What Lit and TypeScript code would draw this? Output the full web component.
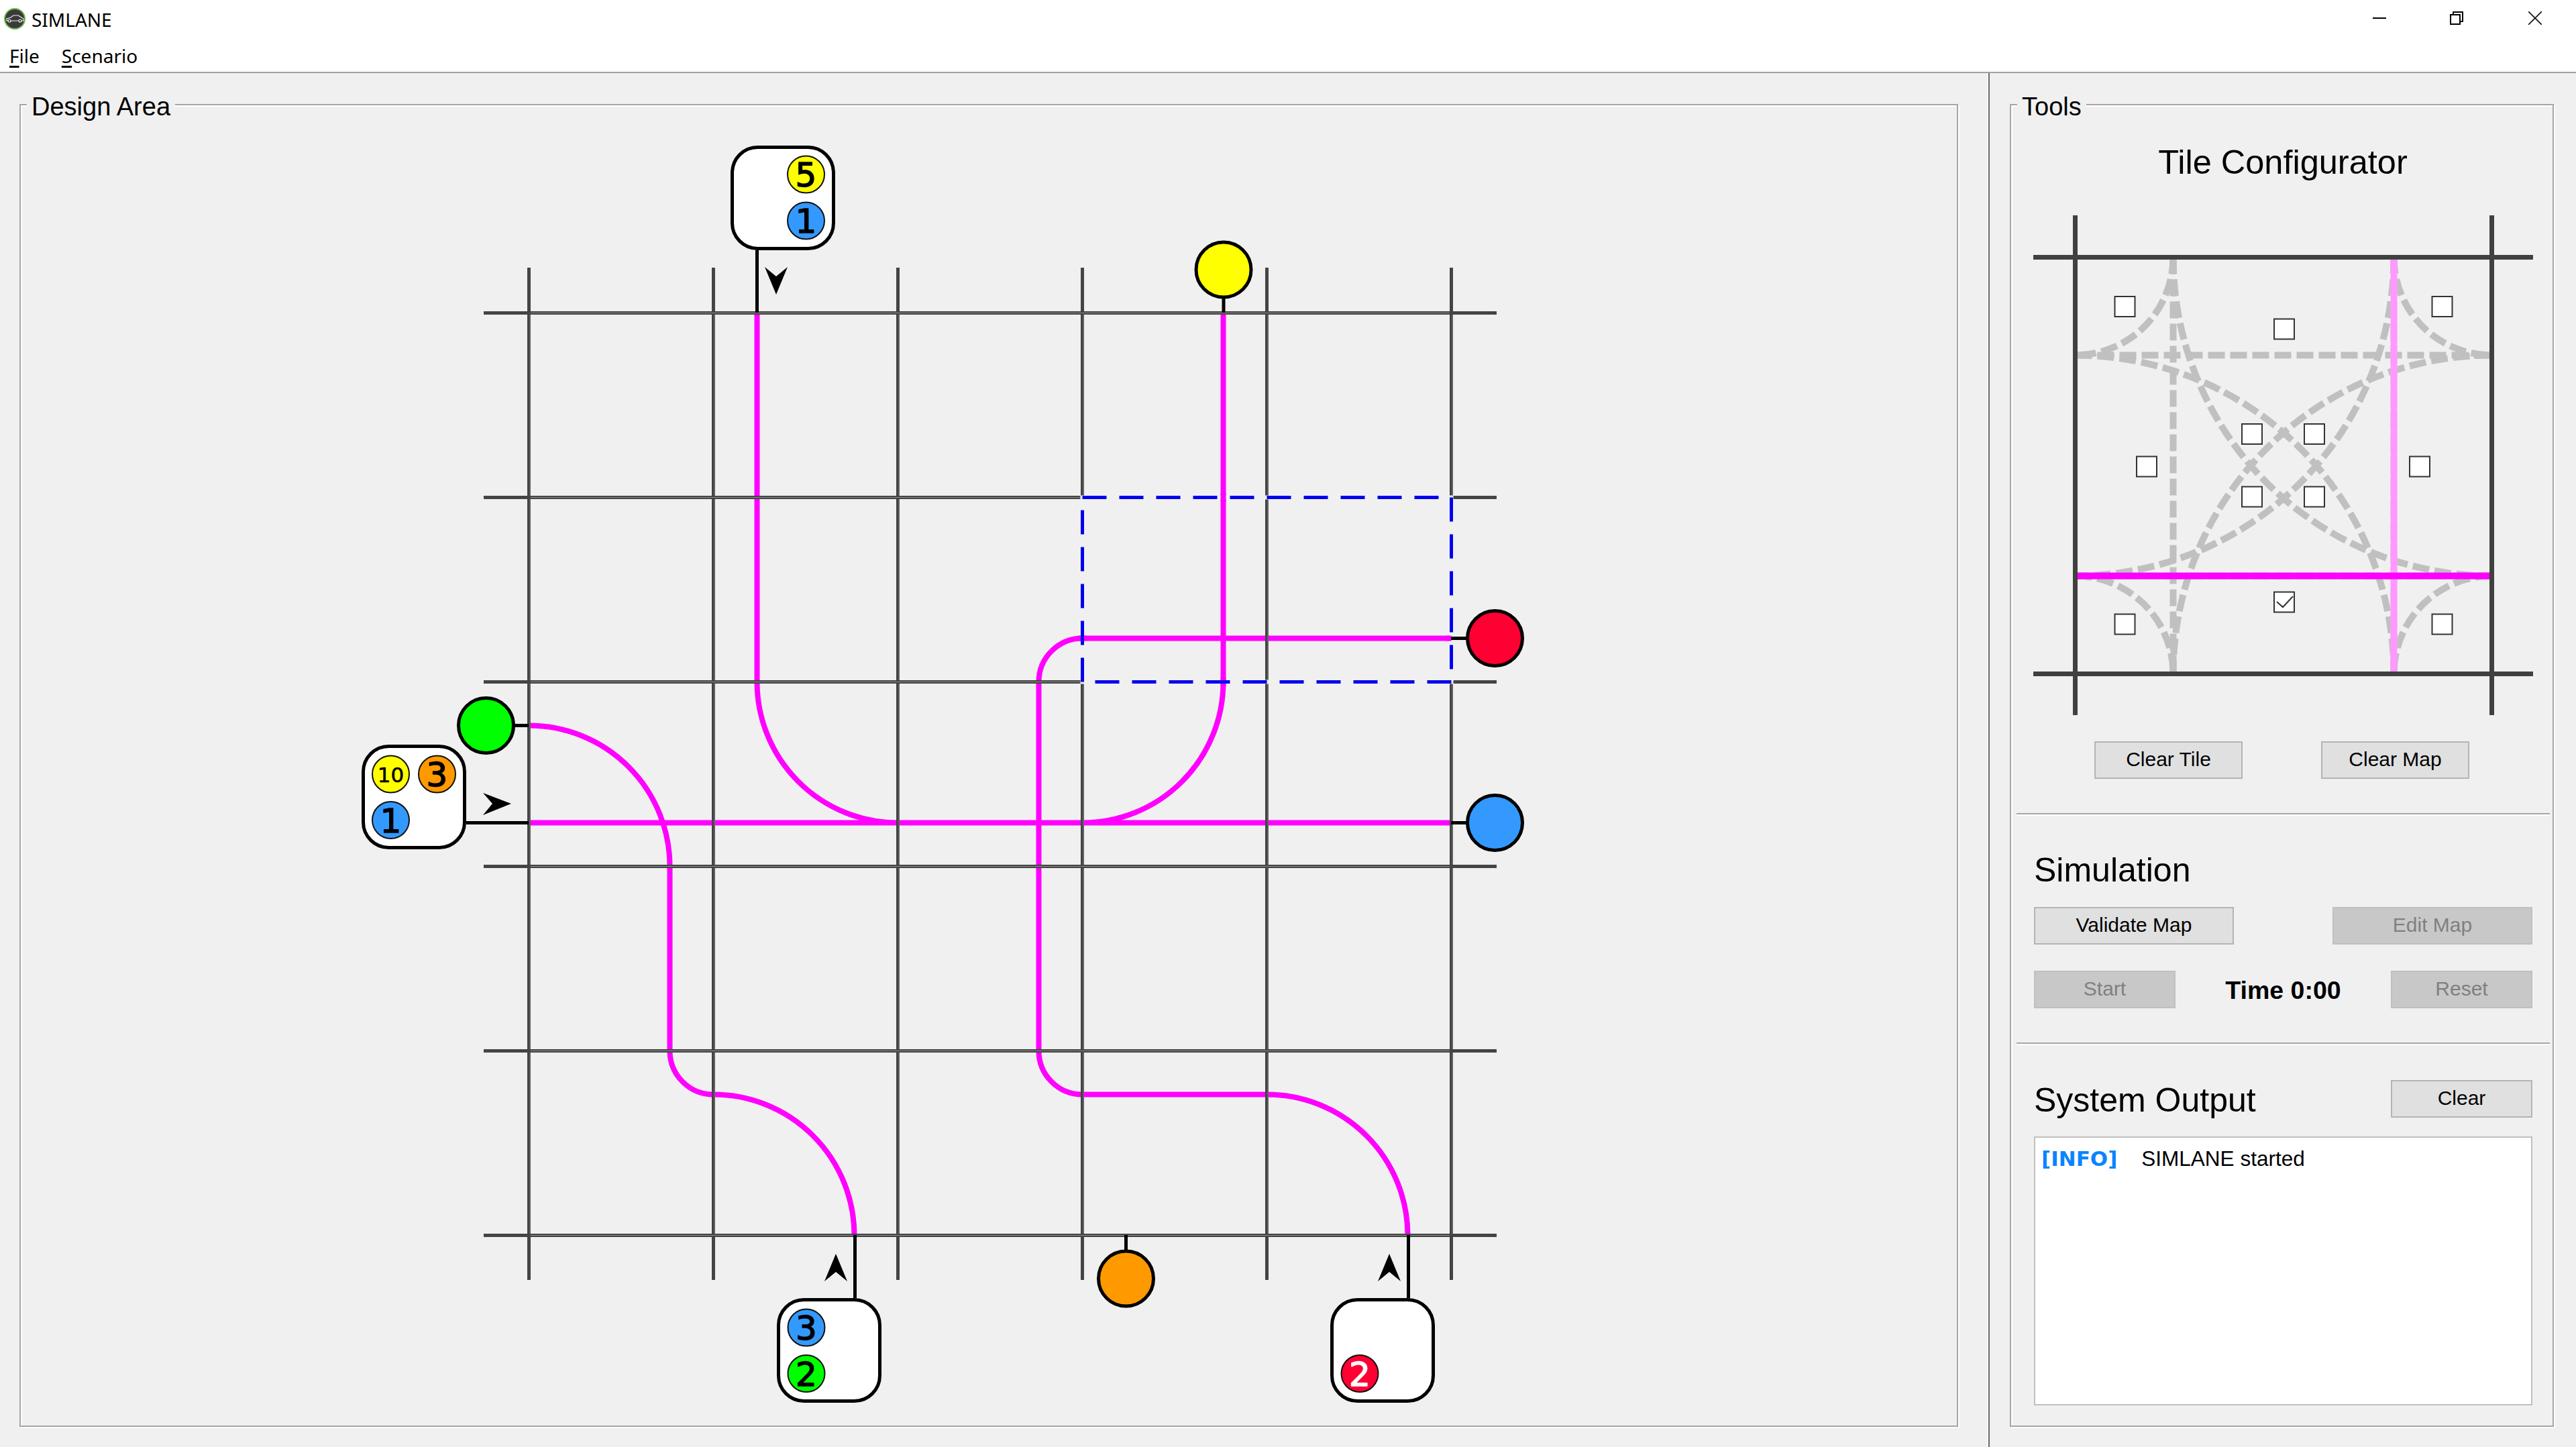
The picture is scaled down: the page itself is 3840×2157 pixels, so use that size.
import { LitElement, html, css, svg } from 'lit';
import { customElement } from 'lit/decorators.js';

interface Badge {
  x: number;
  y: number;
  fill: string;
  label: string;
  light?: boolean;
}

const GRID_X = [788.5, 1063.5, 1338.5, 1613.5, 1888.5, 2163.5];
const GRID_Y = [466.5, 741.5, 1016.5, 1291.5, 1566.5, 1841.5];

const ROUTES = [
  'M1128.5 466.5 V1016.5 A210 210 0 0 0 1338.5 1226.5 H1613.5 A210 210 0 0 0 1823.5 1016.5 V466.5',
  'M2163.5 951.5 H1613.5 A65 65 0 0 0 1548.5 1016.5 V1566.5 A65 65 0 0 0 1613.5 1631.5 H1888.5 A210 210 0 0 1 2098.5 1841.5',
  'M788.5 1081.5 A210 210 0 0 1 998.5 1291.5 V1566.5 A65 65 0 0 0 1063.5 1631.5 A210 210 0 0 1 1273.5 1841.5',
  'M788.5 1226.5 H2163.5',
];

// route pieces that cross the edge of the selection, repainted over its backing
const SELECTION_CROSSINGS = 'M1823.5 735 V748 M1823.5 1010 V1023 M1607 951.5 H1620 M2157 951.5 H2163.5';

const STUBS = [
  'M1128.5 373 V466', 'M1824 402 V466', 'M2163 951.5 H2228', 'M2163 1226.5 H2228',
  'M724 1081.5 H788', 'M695 1226.5 H788', 'M1274.5 1841 V1935', 'M2099.5 1841 V1935', 'M1678.5 1841 V1906',
];

const JUNCTIONS = [
  { x: 1824, y: 402, fill: '#ffff00' },
  { x: 2228.5, y: 951.5, fill: '#ff0033' },
  { x: 2228.5, y: 1226.5, fill: '#3399ff' },
  { x: 724.5, y: 1081.5, fill: '#00ff00' },
  { x: 1678.5, y: 1906, fill: '#ff9900' },
];

const SOURCES = [
  { x: 1091.5, y: 219.5 },
  { x: 541.5, y: 1112.5 },
  { x: 1160.5, y: 1937.5 },
  { x: 1985.5, y: 1937.5 },
];

const ARROWS = [
  '1140,398 1157,412 1174,398 1157,439',
  '720,1182 734,1198 720,1215 762,1198',
  '1246,1869 1229,1910 1246,1896 1263,1910',
  '2071,1869 2054,1910 2071,1896 2088,1910',
];

const BADGES: Badge[] = [
  { x: 1201.5, y: 260, fill: '#ffff00', label: '5' },
  { x: 1201.5, y: 329, fill: '#3399ff', label: '1' },
  { x: 582.5, y: 1154, fill: '#ffff00', label: '10' },
  { x: 651.5, y: 1154, fill: '#ff9900', label: '3' },
  { x: 582.5, y: 1222.5, fill: '#3399ff', label: '1' },
  { x: 1202, y: 1979, fill: '#3399ff', label: '3' },
  { x: 1202, y: 2047.5, fill: '#00ff00', label: '2' },
  { x: 2027, y: 2047.5, fill: '#ff0033', label: '2', light: true },
];

// tile configurator: lanes as offsets inside a 621 tile whose corner is at 3093.5,383.5
const TILE_DASHED = [
  'M146 0 V621', 'M475 0 V621', 'M0 146 H621', 'M0 475 H621',
  'M146 0 A475 475 0 0 0 621 475', 'M475 0 A475 475 0 0 1 0 475',
  'M0 146 A475 475 0 0 1 475 621', 'M621 146 A475 475 0 0 0 146 621',
  'M146 0 A146 146 0 0 1 0 146', 'M475 0 A146 146 0 0 0 621 146',
  'M0 475 A146 146 0 0 1 146 621', 'M621 475 A146 146 0 0 0 475 621',
];

const CHECKS = [
  [3167.5, 457], [3405, 490.5], [3640.5, 457], [3200, 695.5], [3607, 695.5],
  [3357, 647], [3450, 647], [3357, 740.5], [3450, 740.5],
  [3405, 897.5], [3167.5, 930.5], [3640.5, 930.5],
];

@customElement('app-root')
export class AppRoot extends LitElement {
  static styles = css`
    :host {
      display: block;
      width: 3840px;
      height: 2157px;
      overflow: hidden;
      background: #f0f0f0;
      font-family: 'Liberation Sans', Arial, sans-serif;
      color: #000;
    }
    svg {
      display: block;
    }
    .chrome {
      background: #fff;
      border-bottom: 2px solid #a0a0a0;
      font-family: 'Noto Sans', 'Open Sans', sans-serif;
      font-size: 28px;
    }
    .titlebar {
      height: 56px;
      display: flex;
      align-items: flex-start;
    }
    .app-icon {
      margin: 12px 9px 0 6px;
    }
    .app-name {
      line-height: 56px;
      margin-top: 1px;
    }
    .window-buttons {
      margin-left: auto;
      display: flex;
      gap: 95px;
      padding: 17px 51px 0 0;
    }
    .window-close {
      margin-left: 2px;
    }
    .menubar {
      height: 51px;
      display: flex;
      gap: 33px;
      padding-left: 14px;
      line-height: 54px;
    }
    .menubar u {
      text-decoration-thickness: 3px;
      text-underline-offset: 4px;
    }
    .main {
      display: flex;
      height: 2048px;
    }
    .left-pane {
      width: 2966px;
      box-sizing: border-box;
      padding: 46px 0 0 29px;
      border-right: 2px solid #6a6a6a;
      box-shadow: inset -6px 0 0 -4px #f8f8f8;
    }
    .group {
      position: relative;
      box-sizing: border-box;
      height: 1972px;
      border: 2px solid #a6a6a6;
      box-shadow: inset 2px 2px 0 #fff, 2px 2px 0 #fff;
    }
    .design {
      width: 2890px;
    }
    .tools {
      width: 811px;
      margin: 46px 0 0 30px;
      display: flex;
      flex-direction: column;
    }
    .legend {
      position: absolute;
      top: -20px;
      left: 9px;
      padding: 0 7px;
      background: #f0f0f0;
      font-size: 38px;
      line-height: 44px;
    }
    .tile-title {
      margin-top: 55px;
      padding-left: 3px;
      font-size: 50.5px;
      line-height: 60px;
      text-align: center;
    }
    .config {
      margin-top: 28px;
    }
    .tile-buttons {
      margin-top: 30px;
      display: flex;
      justify-content: center;
      gap: 117px;
    }
    button {
      box-sizing: border-box;
      width: 221px;
      height: 56px;
      padding: 0 0 3px;
      background: #e0e0e0;
      border: 2px solid #b4b4b4;
      border-radius: 0;
      font-family: inherit;
      font-size: 30px;
      color: #000;
    }
    button:disabled {
      background: #c8c8c8;
      border-color: #c0c0c0;
      color: #808080;
    }
    button.wide {
      width: 298px;
    }
    button.narrow {
      width: 211px;
    }
    .separator {
      height: 2px;
      margin: 51px 4px 0 8px;
      background: #a6a6a6;
      box-shadow: 0 2px 0 #fff;
    }
    .section {
      padding: 0 30px 0 34px;
    }
    h2 {
      margin: 0;
      font-weight: 400;
      font-size: 50px;
      line-height: 60px;
    }
    .simulation {
      margin-top: 53px;
    }
    .row {
      display: flex;
      justify-content: space-between;
      align-items: center;
    }
    .row-first {
      margin-top: 25px;
    }
    .row-second {
      margin-top: 39px;
    }
    .time {
      padding-top: 2px;
      font-weight: 700;
      font-size: 37.5px;
    }
    .output-section {
      margin-top: 54px;
    }
    .output-head {
      display: flex;
      justify-content: space-between;
      align-items: flex-start;
    }
    .output {
      box-sizing: border-box;
      height: 401px;
      margin-top: 24px;
      padding: 13px 9px;
      background: #fff;
      border: 2px solid #c0c0c0;
      display: flex;
      gap: 36px;
      align-items: baseline;
      line-height: 36px;
    }
    .tag {
      font-family: 'DejaVu Sans', sans-serif;
      font-weight: 700;
      font-size: 31px;
      color: #0a84ff;
    }
    .message {
      font-size: 31.5px;
    }
  `;

  private _renderDesignCanvas() {
    return html`
      <svg width="2886" height="1968" viewBox="31 157 2886 1968">
        <path d=${ROUTES.join(' ')} fill="none" stroke="#ff00ff" stroke-width="8" />
        ${GRID_X.map((x) => svg`
          <path d="M${x} 399 V1908" stroke="#444" stroke-width="5" />
          <path d="M${x + 1.5} 466.5 V1841.5" stroke="#808080" stroke-width="1" />
        `)}
        ${GRID_Y.map((y) => svg`
          <path d="M721 ${y} H2231" stroke="#444" stroke-width="5" />
          <path d="M791 ${y} H2161" stroke="#8c8c8c" stroke-width="1" />
        `)}
        <rect x="1613.5" y="741.5" width="550" height="275" fill="none" stroke="#f0f0f0" stroke-width="6" />
        <path d=${SELECTION_CROSSINGS} fill="none" stroke="#ff00ff" stroke-width="8" />
        <rect x="1613.5" y="741.5" width="550" height="275" fill="none" stroke="#0000ee" stroke-width="5" stroke-dasharray="36 19" />
        ${STUBS.map((d) => svg`<path d=${d} stroke="#000" stroke-width="5" />`)}
        ${JUNCTIONS.map((j) => svg`<circle cx=${j.x} cy=${j.y} r="41" fill=${j.fill} stroke="#000" stroke-width="5" />`)}
        ${SOURCES.map((s) => svg`<rect x=${s.x} y=${s.y} width="151" height="151" rx="38" fill="#fff" stroke="#000" stroke-width="5" />`)}
        ${ARROWS.map((p) => svg`<polygon points=${p} fill="#000" />`)}
        ${BADGES.map((b) => this._renderBadge(b))}
      </svg>
    `;
  }

  private _renderBadge(b: Badge) {
    const small = b.label.length > 1;
    const colour = b.light ? '#fff' : '#000';
    return svg`
      <circle cx=${b.x} cy=${b.y} r="27.5" fill=${b.fill} stroke="#111" stroke-width="2" />
      <text
        x=${b.x}
        y=${b.y + (small ? 12 : 18)}
        text-anchor="middle"
        font-family="DejaVu Sans, sans-serif"
        font-size=${small ? 31 : 50}
        fill=${colour}
        stroke=${colour}
        stroke-width=${small ? 0.6 : 1.5}
        stroke-linejoin="round"
      >${b.label}</text>
    `;
  }

  private _renderTileConfigurator() {
    return html`
      <svg class="config" width="807" height="775" viewBox="2998 300 807 775">
        <g transform="translate(3093.5 383.5)" fill="none">
          ${TILE_DASHED.map((d) => svg`<path d=${d} stroke="#c0c0c0" stroke-width="10" stroke-dasharray="25 8" />`)}
          <path d="M475 0 V621" stroke="#ff99ff" stroke-width="10" />
          <path d="M0 475 H621" stroke="#ff00ff" stroke-width="10" />
        </g>
        <path d="M3093.5 321 V1066 M3714.5 321 V1066 M3031 383.5 H3776 M3031 1004.5 H3776" stroke="#404040" stroke-width="7" fill="none" />
        ${CHECKS.map(([x, y]) => svg`<rect x=${x - 15} y=${y - 15} width="30" height="30" fill="#fff" stroke="#333" stroke-width="2" />`)}
        <path d="M3394 897 L3403 905 L3418 889" fill="none" stroke="#333" stroke-width="2" />
      </svg>
    `;
  }

  render() {
    return html`
      <div class="chrome">
        <div class="titlebar">
          <svg class="app-icon" width="32" height="32" viewBox="0 0 32 32">
            <circle cx="16" cy="16" r="15" fill="#3a3a3a" stroke="#6ab84c" stroke-width="2" />
            <path d="M4 19 V16 L10 14 L14 11 H21 L26 14 L29 16 V19 H26 M10 19 H22 M7 19 H4" fill="none" stroke="#eee" stroke-width="1.2" />
            <circle cx="8" cy="19" r="2" fill="none" stroke="#eee" stroke-width="1.2" />
            <circle cx="24" cy="19" r="2" fill="none" stroke="#eee" stroke-width="1.2" />
          </svg>
          <span class="app-name">SIMLANE</span>
          <div class="window-buttons">
            <svg width="20" height="20" viewBox="0 0 20 20"><path d="M0 10 H20" stroke="#000" stroke-width="2" /></svg>
            <svg width="20" height="20" viewBox="0 0 20 20"><path d="M1 5 H15 V19 H1 Z M5 5 V1 H19 V15 H15" fill="none" stroke="#000" stroke-width="2" /></svg>
            <svg class="window-close" width="20" height="20" viewBox="0 0 20 20"><path d="M0 0 L20 20 M20 0 L0 20" stroke="#111" stroke-width="1.6" /></svg>
          </div>
        </div>
        <div class="menubar">
          <span><u>F</u>ile</span>
          <span><u>S</u>cenario</span>
        </div>
      </div>
      <div class="main">
        <div class="left-pane">
          <div class="group design">
            <span class="legend">Design Area</span>
            ${this._renderDesignCanvas()}
          </div>
        </div>
        <div class="group tools">
          <span class="legend">Tools</span>
          <div class="tile-title">Tile Configurator</div>
          ${this._renderTileConfigurator()}
          <div class="tile-buttons">
            <button>Clear Tile</button>
            <button>Clear Map</button>
          </div>
          <div class="separator"></div>
          <div class="section simulation">
            <h2>Simulation</h2>
            <div class="row row-first">
              <button class="wide">Validate Map</button>
              <button class="wide" disabled>Edit Map</button>
            </div>
            <div class="row row-second">
              <button class="narrow" disabled>Start</button>
              <span class="time">Time 0:00</span>
              <button class="narrow" disabled>Reset</button>
            </div>
          </div>
          <div class="separator"></div>
          <div class="section output-section">
            <div class="output-head">
              <h2>System Output</h2>
              <button class="narrow">Clear</button>
            </div>
            <div class="output">
              <span class="tag">[INFO]</span>
              <span class="message">SIMLANE started</span>
            </div>
          </div>
        </div>
      </div>
    `;
  }
}

declare global {
  interface HTMLElementTagNameMap {
    'app-root': AppRoot;
  }
}
